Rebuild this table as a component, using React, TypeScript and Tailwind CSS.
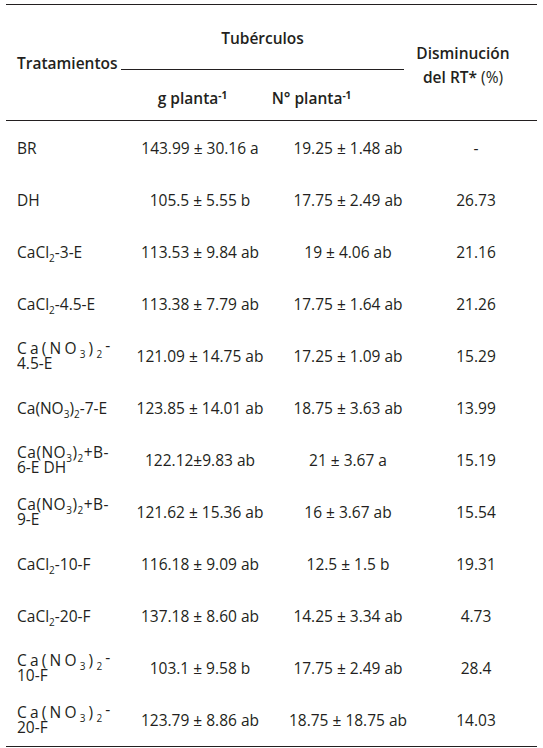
import React from "react";

type Row = {
  name: React.ReactNode;
  g: string;
  n: string;
  d: string;
};

const Sub = ({ children }: { children: React.ReactNode }) => (
  <sub className="text-[10px] leading-none relative top-[4px]">{children}</sub>
);

const CaNO3 = () => (
  <>
    Ca(NO<Sub>3</Sub>)<Sub>2</Sub>
  </>
);

// spread first line like justified text in the original pdf
const SpreadCaNO3 = ({ rest }: { rest: string }) => (
  <>
    <span className="tracking-[3.2px]">
      Ca(NO<Sub>3</Sub>)<Sub>2</Sub>
      <span className="relative -top-[3px]">-</span>
    </span>
    <br />
    {rest}
  </>
);

const rows: Row[] = [
  { name: "BR", g: "143.99 ± 30.16 a", n: "19.25 ± 1.48 ab", d: "-" },
  { name: "DH", g: "105.5 ± 5.55 b", n: "17.75 ± 2.49 ab", d: "26.73" },
  {
    name: (
      <>
        CaCl<Sub>2</Sub>-3-E
      </>
    ),
    g: "113.53 ± 9.84 ab",
    n: "19 ± 4.06 ab",
    d: "21.16",
  },
  {
    name: (
      <>
        CaCl<Sub>2</Sub>-4.5-E
      </>
    ),
    g: "113.38 ± 7.79 ab",
    n: "17.75 ± 1.64 ab",
    d: "21.26",
  },
  { name: <SpreadCaNO3 rest="4.5-E" />, g: "121.09 ± 14.75 ab", n: "17.25 ± 1.09 ab", d: "15.29" },
  {
    name: (
      <>
        <CaNO3 />
        -7-E
      </>
    ),
    g: "123.85 ± 14.01 ab",
    n: "18.75 ± 3.63 ab",
    d: "13.99",
  },
  {
    name: (
      <>
        <span className="tracking-[0.5px]">
          <CaNO3 />
          +B-
        </span>
        <br />
        6-E DH
      </>
    ),
    g: "122.12±9.83 ab",
    n: "21 ± 3.67 a",
    d: "15.19",
  },
  {
    name: (
      <>
        <span className="tracking-[0.5px]">
          <CaNO3 />
          +B-
        </span>
        <br />
        9-E
      </>
    ),
    g: "121.62 ± 15.36 ab",
    n: "16 ± 3.67 ab",
    d: "15.54",
  },
  {
    name: (
      <>
        CaCl<Sub>2</Sub>-10-F
      </>
    ),
    g: "116.18 ± 9.09 ab",
    n: "12.5 ± 1.5 b",
    d: "19.31",
  },
  {
    name: (
      <>
        CaCl<Sub>2</Sub>-20-F
      </>
    ),
    g: "137.18 ± 8.60 ab",
    n: "14.25 ± 3.34 ab",
    d: "4.73",
  },
  { name: <SpreadCaNO3 rest="10-F" />, g: "103.1 ± 9.58 b", n: "17.75 ± 2.49 ab", d: "28.4" },
  { name: <SpreadCaNO3 rest="20-F" />, g: "123.79 ± 8.86 ab", n: "18.75 ± 18.75 ab", d: "14.03" },
];

function App() {
  return (
    <div
      className="w-[543px] h-[748px] bg-white text-[#231f20] text-[15.5px] pt-[4px] pl-[6px]"
      style={{ fontFamily: '"Open Sans", "Noto Sans", sans-serif' }}
    >
      <div className="w-[531px]">
        <div className="h-px bg-[#231f20]" />
        {/* header */}
        <div className="flex h-[115px] font-semibold">
          <div className="w-[115px] pl-[11px] flex items-center pt-[3px]">Tratamientos</div>
          <div className="w-[283px] flex flex-col">
            <div className="h-[64px] flex items-center justify-center pt-[3px]">Tubérculos</div>
            <div className="h-px bg-[#231f20]" />
            <div className="flex-1 flex items-center pt-[8px]">
              <div className="w-[143px] text-center">
                g planta<sup className="text-[10px] font-bold">-1</sup>
              </div>
              <div className="w-[95px] text-center">
                N° planta<sup className="text-[10px] font-bold">-1</sup>
              </div>
            </div>
          </div>
          <div className="w-[118px] flex items-center justify-center text-center leading-[24px] pt-[4px]">
            <div>
              Disminución
              <br />
              del RT*<span className="font-normal"> (%)</span>
            </div>
          </div>
        </div>
        <div className="h-px bg-[#231f20]" />
        {/* body */}
        <div className="pt-[1px]">
          {rows.map((r, i) => (
            <div key={i} className="flex h-[52px] items-center leading-[15px]">
              <div className="w-[115px] pl-[11px]">{r.name}</div>
              <div className="w-[158px] text-center">{r.g}</div>
              <div className="w-[138px] text-center">{r.n}</div>
              <div className="w-[118px] text-center">{r.d}</div>
            </div>
          ))}
        </div>
        <div className="h-px bg-[#231f20]" />
      </div>
    </div>
  );
}

export default App;
